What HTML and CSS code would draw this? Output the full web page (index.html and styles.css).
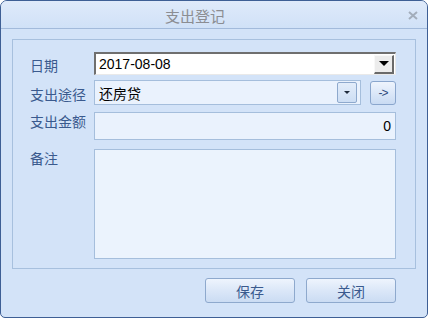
FILE: index.html
```html
<!DOCTYPE html>
<html>
<head>
<meta charset="utf-8">
<link rel="stylesheet" href="styles.css">
</head>
<body>
<div class="window">
  <div class="titlebar">
    <span class="title">支出登记</span>
    <svg class="close" width="10" height="9" viewBox="0 0 10 9"><path d="M1 1 L9 8 M9 1 L1 8" stroke="#a3adbb" stroke-width="2" fill="none"/></svg>
  </div>
  <div class="content">
    <div class="panel">
      <div class="row r-date">
        <div class="label">日期</div>
        <div class="date">
          <span class="val">2017-08-08</span>
          <span class="ddbtn"><span class="tri"></span></span>
        </div>
      </div>
      <div class="row r-combo">
        <div class="label">支出途径</div>
        <div class="combo">
          <span class="val cjk">还房贷</span>
          <span class="cbtn"><span class="tri small"></span></span>
        </div>
        <div class="arrow">-&gt;</div>
      </div>
      <div class="row r-amount">
        <div class="label top">支出金额</div>
        <div class="amount"><span class="val">0</span></div>
      </div>
      <div class="row r-memo">
        <div class="label top">备注</div>
        <div class="memo"></div>
      </div>
    </div>
    <div class="buttons">
      <div class="btn">保存</div>
      <div class="btn">关闭</div>
    </div>
  </div>
</div>
</body>
</html>
```
FILE: styles.css
```css
html, body {
  margin: 0;
  padding: 0;
  background: #ffffff;
}
body {
  width: 428px;
  height: 318px;
  overflow: hidden;
  font-family: "Noto Sans CJK SC", "Liberation Sans", sans-serif;
}
.window {
  box-sizing: border-box;
  width: 428px;
  height: 318px;
  border: 1px solid #3e5f95;
  border-radius: 7px 7px 5px 5px;
  background: #d3e3f8;
  overflow: hidden;
  display: flex;
  flex-direction: column;
}
.titlebar {
  height: 27px;
  flex: none;
  border-bottom: 1px solid #a2badb;
  background: linear-gradient(#dfeafa, #d0e1f7);
  display: flex;
  align-items: center;
  justify-content: center;
  position: relative;
}
.title {
  font-size: 15px;
  color: #8b8d92;
  line-height: 18px;
  margin-left: -38px;
  margin-top: 3px;
}
.close {
  position: absolute;
  right: 9px;
  top: 10px;
}
.content {
  flex: 1;
  display: flex;
  flex-direction: column;
  padding: 10px 11px 0 11px;
}
.panel {
  box-sizing: border-box;
  height: 230px;
  flex: none;
  border: 1px solid #a7c0de;
  padding: 12px 19px 0 17px;
  display: flex;
  flex-direction: column;
}
.row {
  display: flex;
  align-items: center;
}
.r-combo { margin-top: 5px; }
.r-amount { margin-top: 7px; align-items: flex-start; }
.r-memo { margin-top: 9px; align-items: flex-start; }
.label {
  width: 64px;
  flex: none;
  font-size: 14px;
  color: #3a5a8e;
  line-height: 18px;
  margin-top: 2px;
}
.label.top { margin-top: 0; }
.val {
  font-family: "Liberation Sans", "Noto Sans CJK SC", sans-serif;
  font-size: 14px;
  color: #000;
}
.val.cjk { font-family: "Noto Sans CJK SC", sans-serif; }
.date {
  flex: 1;
  box-sizing: border-box;
  height: 23px;
  background: #fff;
  border-style: solid;
  border-width: 2px 1px 1px 2px;
  border-color: #6f6f6f #e9e9e9 #e9e9e9 #6f6f6f;
  display: flex;
  align-items: center;
  padding-left: 3px;
}
.date .val { flex: 1; line-height: 18px; }
.ddbtn {
  box-sizing: border-box;
  width: 20px;
  height: 19px;
  margin-right: 1px;
  background: #ececec;
  border-style: solid;
  border-width: 1px 2px 2px 1px;
  border-color: #f8f8f8 #6a6a6a #6a6a6a #f8f8f8;
  display: flex;
  align-items: center;
  justify-content: center;
}
.tri {
  width: 0;
  height: 0;
  border-left: 5px solid transparent;
  border-right: 5px solid transparent;
  border-top: 5px solid #000;
}
.tri.small {
  border-left-width: 3px;
  border-right-width: 3px;
  border-top: 3px solid #1e2a3c;
}
.combo {
  box-sizing: border-box;
  width: 267px;
  height: 25px;
  background: #eaf2fd;
  border: 1px solid #a5bedc;
  display: flex;
  align-items: center;
  padding-left: 4px;
  padding-right: 3px;
}
.combo .val { flex: 1; line-height: 18px; }
.cbtn {
  box-sizing: border-box;
  width: 20px;
  height: 21px;
  border: 1px solid #8ea9cd;
  border-radius: 2px;
  background: linear-gradient(#e3edfa, #cddef4);
  display: flex;
  align-items: center;
  justify-content: center;
}
.arrow {
  box-sizing: border-box;
  width: 26px;
  height: 24px;
  margin-left: 9px;
  margin-top: 1px;
  border: 1px solid #8aa6cd;
  border-radius: 3px;
  background: linear-gradient(#eef4fd, #c9dbf3);
  display: flex;
  align-items: center;
  justify-content: center;
  font-family: "Liberation Sans", sans-serif;
  font-size: 12px;
  letter-spacing: -1px;
  color: #2f4c7c;
}
.amount {
  flex: 1;
  box-sizing: border-box;
  height: 28px;
  background: #eaf2fd;
  border: 1px solid #a5bedc;
  display: flex;
  align-items: center;
  justify-content: flex-end;
  padding-right: 4px;
}
.memo {
  flex: 1;
  box-sizing: border-box;
  height: 110px;
  background: #ebf3fd;
  border: 1px solid #a5bedc;
}
.buttons {
  display: flex;
  justify-content: flex-end;
  gap: 11px;
  padding-top: 9px;
  padding-right: 20px;
}
.btn {
  box-sizing: border-box;
  width: 90px;
  height: 25px;
  border: 1px solid #8ea9cd;
  border-radius: 3px;
  background: linear-gradient(#eef4fd 0%, #dbe7f8 50%, #cbdcf3 100%);
  display: flex;
  align-items: center;
  justify-content: center;
  font-size: 14px;
  color: #3a5a8e;
  line-height: 18px;
}
```
